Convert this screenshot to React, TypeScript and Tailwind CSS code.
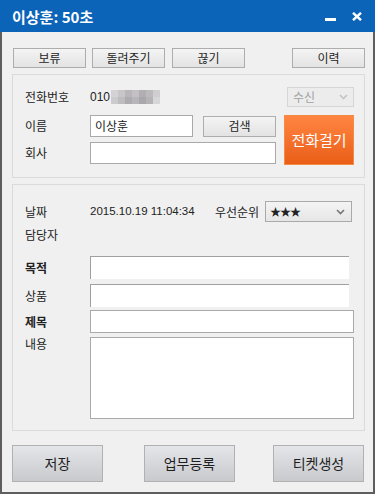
import React from 'react';

const mosaic = [
  ['#d3d3d6', '#c9c6c9', '#b9b6bb', '#c4c0c3', '#b1afb4', '#bdbabd', '#cfcdd0'],
  ['#cbcacd', '#bfbcc0', '#aeabb0', '#b8b5b9', '#a9a7ac', '#b6b3b7', '#d6d5d8'],
];

function Chevron({ color }: { color: string }) {
  return (
    <svg width="9" height="6" viewBox="0 0 9 6">
      <path d="M1 1 L4.5 4.5 L8 1" fill="none" stroke={color} strokeWidth="1.6" />
    </svg>
  );
}

function TopButton({ label, className }: { label: string; className?: string }) {
  return (
    <button className={`w-[73px] h-[20px] border border-[#adadad] bg-gradient-to-b from-[#f4f4f4] to-[#e3e3e3] text-[12px] text-[#1e1e1e] flex items-center justify-center ${className ?? ''}`}>
      {label}
    </button>
  );
}

function BottomButton({ label, className }: { label: string; className?: string }) {
  return (
    <button className={`w-[91px] h-[37px] border border-[#b1b1b1] bg-gradient-to-b from-[#e4e5e8] to-[#c8cace] text-[14px] text-[#1e1e1e] flex items-center justify-center ${className ?? ''}`}>
      {label}
    </button>
  );
}

export default function App() {
  return (
    <div className="w-[375px] h-[494px] bg-[#f0f0f0] font-['Noto_Sans_CJK_KR',sans-serif] text-[#222] flex flex-col overflow-hidden">
      {/* title bar */}
      <div className="h-[32px] shrink-0 bg-[#0b64b8] flex items-center pl-[12px] pr-[13px]">
        <span className="text-white font-bold text-[15px] leading-none">이상훈: 50초</span>
        <div className="ml-auto flex items-center gap-[16px]">
          <div className="w-[11px] h-[3px] bg-white mt-[6px]" />
          <svg width="10" height="9" viewBox="0 0 10 9">
            <path d="M1 0.8 L9 8.2 M9 0.8 L1 8.2" stroke="white" strokeWidth="2.4" />
          </svg>
        </div>
      </div>

      <div className="flex-1 border-x-2 border-b-2 border-[#5e5e5e] flex flex-col pl-[10px] pr-[8px]">
        {/* action buttons */}
        <div className="mt-[16px] flex h-[20px]">
          <TopButton label="보류" className="ml-[1px]" />
          <TopButton label="돌려주기" className="ml-[6px]" />
          <TopButton label="끊기" className="ml-[7px]" />
          <TopButton label="이력" className="ml-auto" />
        </div>

        {/* caller panel */}
        <div className="mt-[6px] h-[104px] border border-[#dadada] pl-[12px] pr-[10px] pt-[12px] text-[12px]">
          <div className="flex items-center h-[20px]">
            <span className="w-[65px]">전화번호</span>
            <span className="font-['Liberation_Sans',sans-serif] text-[12px]">010</span>
            <div className="ml-[1px] flex flex-col">
              {mosaic.map((row, i) => (
                <div key={i} className="flex">
                  {row.map((c, j) => (
                    <div key={j} className="w-[7px] h-[7px]" style={{ backgroundColor: c }} />
                  ))}
                </div>
              ))}
            </div>
            <div className="ml-auto w-[67px] h-[20px] border border-[#d6d6d6] bg-[#ececec] flex items-center pl-[5px] pr-[5px] text-[#a3a3a3]">
              <span>수신</span>
              <span className="ml-auto"><Chevron color="#c4c4c4" /></span>
            </div>
          </div>

          <div className="mt-[8px] flex">
            <div className="flex flex-col">
              <div className="flex items-center h-[22px]">
                <span className="w-[65px]">이름</span>
                <div className="w-[103px] h-[22px] border border-[#a9a9a9] bg-white flex items-center pl-[4px]">이상훈</div>
                <TopButton label="검색" className="ml-[10px] h-[21px]" />
              </div>
              <div className="mt-[5px] flex items-center h-[22px]">
                <span className="w-[65px]">회사</span>
                <div className="w-[186px] h-[22px] border border-[#a9a9a9] bg-white" />
              </div>
            </div>
            <button className="ml-auto w-[70px] h-[50px] border border-[#f58a45] bg-gradient-to-b from-[#ff8540] to-[#e95e16] text-white text-[15px] flex items-center justify-center">
              전화걸기
            </button>
          </div>
        </div>

        {/* detail panel */}
        <div className="mt-[6px] h-[247px] border border-[#dadada] pl-[12px] pr-[10px] pt-[16px] text-[12px]">
          <div className="flex items-center h-[21px]">
            <span className="w-[65px]">날짜</span>
            <span className="w-[125px] font-['Liberation_Sans',sans-serif] text-[11.5px]">2015.10.19 11:04:34</span>
            <span className="w-[50px]">우선순위</span>
            <div className="w-[87px] h-[21px] border border-[#a9a9a9] bg-gradient-to-b from-[#f4f4f4] to-[#e6e6e6] flex items-center pl-[4px] pr-[6px]">
              <span className="text-[11px] leading-none tracking-[-1px]">★★★</span>
              <span className="ml-auto"><Chevron color="#777" /></span>
            </div>
          </div>
          <div className="mt-[3px] flex items-center h-[20px]">
            <span className="w-[65px]">담당자</span>
          </div>
          <div className="mt-[11px] flex items-center h-[23px]">
            <span className="w-[65px] font-bold">목적</span>
            <div className="w-[259px] h-[23px] border-t border-l border-[#a0a0a0] bg-white" />
          </div>
          <div className="mt-[5px] flex items-center h-[23px]">
            <span className="w-[65px]">상품</span>
            <div className="w-[259px] h-[23px] border-t border-l border-[#a0a0a0] bg-white" />
          </div>
          <div className="mt-[3px] flex items-center h-[23px]">
            <span className="w-[65px] font-bold">제목</span>
            <div className="w-[264px] h-[23px] border border-[#a9a9a9] bg-white" />
          </div>
          <div className="mt-[4px] flex items-start">
            <span className="w-[65px] leading-none mt-[1px]">내용</span>
            <div className="w-[264px] h-[82px] border border-[#a9a9a9] bg-white" />
          </div>
        </div>

        {/* footer buttons */}
        <div className="mt-[14px] flex">
          <BottomButton label="저장" />
          <BottomButton label="업무등록" className="ml-[41px]" />
          <BottomButton label="티켓생성" className="ml-[38px]" />
        </div>
      </div>
    </div>
  );
}
